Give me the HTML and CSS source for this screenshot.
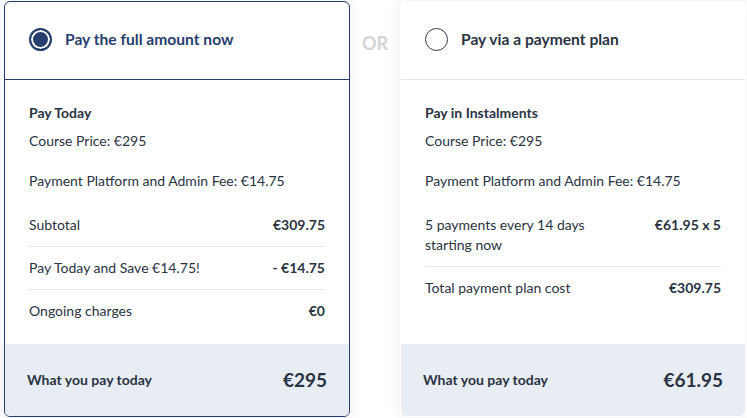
FILE: index.html
```html
<!DOCTYPE html>
<html lang="en">
<head>
<meta charset="utf-8">
<title>Payment options</title>
<link rel="stylesheet" href="styles.css">
</head>
<body>
<div class="options">
  <section class="card card-selected">
    <header class="card-head">
      <span class="radio radio-on"></span>
      <span class="card-title">Pay the full amount now</span>
    </header>
    <div class="card-body">
      <h3 class="body-title">Pay Today</h3>
      <p class="line">Course Price: €295</p>
      <p class="line line-fee">Payment Platform and Admin Fee: €14.75</p>
      <div class="row"><span>Subtotal</span><span class="val">€309.75</span></div>
      <div class="row"><span>Pay Today and Save €14.75!</span><span class="val">- €14.75</span></div>
      <div class="row"><span>Ongoing charges</span><span class="val">€0</span></div>
    </div>
    <footer class="card-foot">
      <span class="foot-label">What you pay today</span>
      <span class="foot-val">€295</span>
    </footer>
  </section>

  <div class="or">OR</div>

  <section class="card">
    <header class="card-head">
      <span class="radio"></span>
      <span class="card-title">Pay via a payment plan</span>
    </header>
    <div class="card-body">
      <h3 class="body-title">Pay in Instalments</h3>
      <p class="line">Course Price: €295</p>
      <p class="line line-fee">Payment Platform and Admin Fee: €14.75</p>
      <div class="row"><span class="wrap">5 payments every 14 days starting now</span><span class="val">€61.95 x 5</span></div>
      <div class="row"><span>Total payment plan cost</span><span class="val">€309.75</span></div>
    </div>
    <footer class="card-foot">
      <span class="foot-label">What you pay today</span>
      <span class="foot-val">€61.95</span>
    </footer>
  </section>
</div>
</body>
</html>
```

FILE: styles.css
```css
* { box-sizing: border-box; }

html, body {
  margin: 0;
  background: #ffffff;
}

body {
  font-family: Lato, "Noto Sans", sans-serif;
  color: #2a3342;
  font-size: 14px;
  line-height: 20px;
}

.options {
  display: flex;
  align-items: stretch;
  padding: 1px 1px 1px 4px;
  height: 418px;
}

.card {
  width: 346px;
  height: 416px;
  display: flex;
  flex-direction: column;
  background: #ffffff;
  border: 1px solid transparent;
  border-radius: 6px;
  overflow: hidden;
  box-shadow: 0 0 16px rgba(0, 0, 0, 0.08);
}

.card-selected {
  border-color: #263e70;
}

.card-head {
  height: 78px;
  display: flex;
  align-items: center;
  gap: 13px;
  padding: 0 0 3px 24px;
  border-bottom: 1px solid #e3e5e8;
}

.card-selected .card-head {
  border-bottom-color: #263e70;
}

.radio {
  width: 23px;
  height: 23px;
  border-radius: 50%;
  border: 1.5px solid #2f3747;
  flex: none;
}

.radio-on {
  border: 2px solid #263e70;
  background: #263e70;
  box-shadow: inset 0 0 0 2px #ffffff;
}

.card-title {
  font-size: 15.6px;
  font-weight: 700;
  color: #2a3342;
}

.card-selected .card-title {
  color: #263e70;
}

.card-body {
  flex: 1;
  padding: 23px 24px 0 24px;
}

.body-title {
  margin: 0 0 8px;
  font-size: 14px;
  line-height: 20px;
  font-weight: 700;
}

.line {
  margin: 0 0 20px;
}

.line-fee {
  margin-bottom: 13px;
}

.row {
  display: flex;
  justify-content: space-between;
  align-items: flex-start;
  padding: 11px 0;
  border-top: 1px solid #e3e5e8;
}

.line-fee + .row {
  border-top: none;
}

.wrap {
  max-width: 185px;
}

.val {
  font-weight: 700;
  white-space: nowrap;
}

.card-foot {
  height: 72px;
  flex: none;
  display: flex;
  align-items: center;
  justify-content: space-between;
  padding: 0 22px 0 22px;
  background: #e8edf4;
}

.foot-label {
  font-weight: 700;
  font-size: 14px;
}

.foot-val {
  font-weight: 700;
  font-size: 19px;
}

.or {
  width: 50px;
  flex: none;
  text-align: center;
  padding-top: 32px;
  font-size: 18px;
  font-weight: 700;
  color: #d3d3d3;
}
```
